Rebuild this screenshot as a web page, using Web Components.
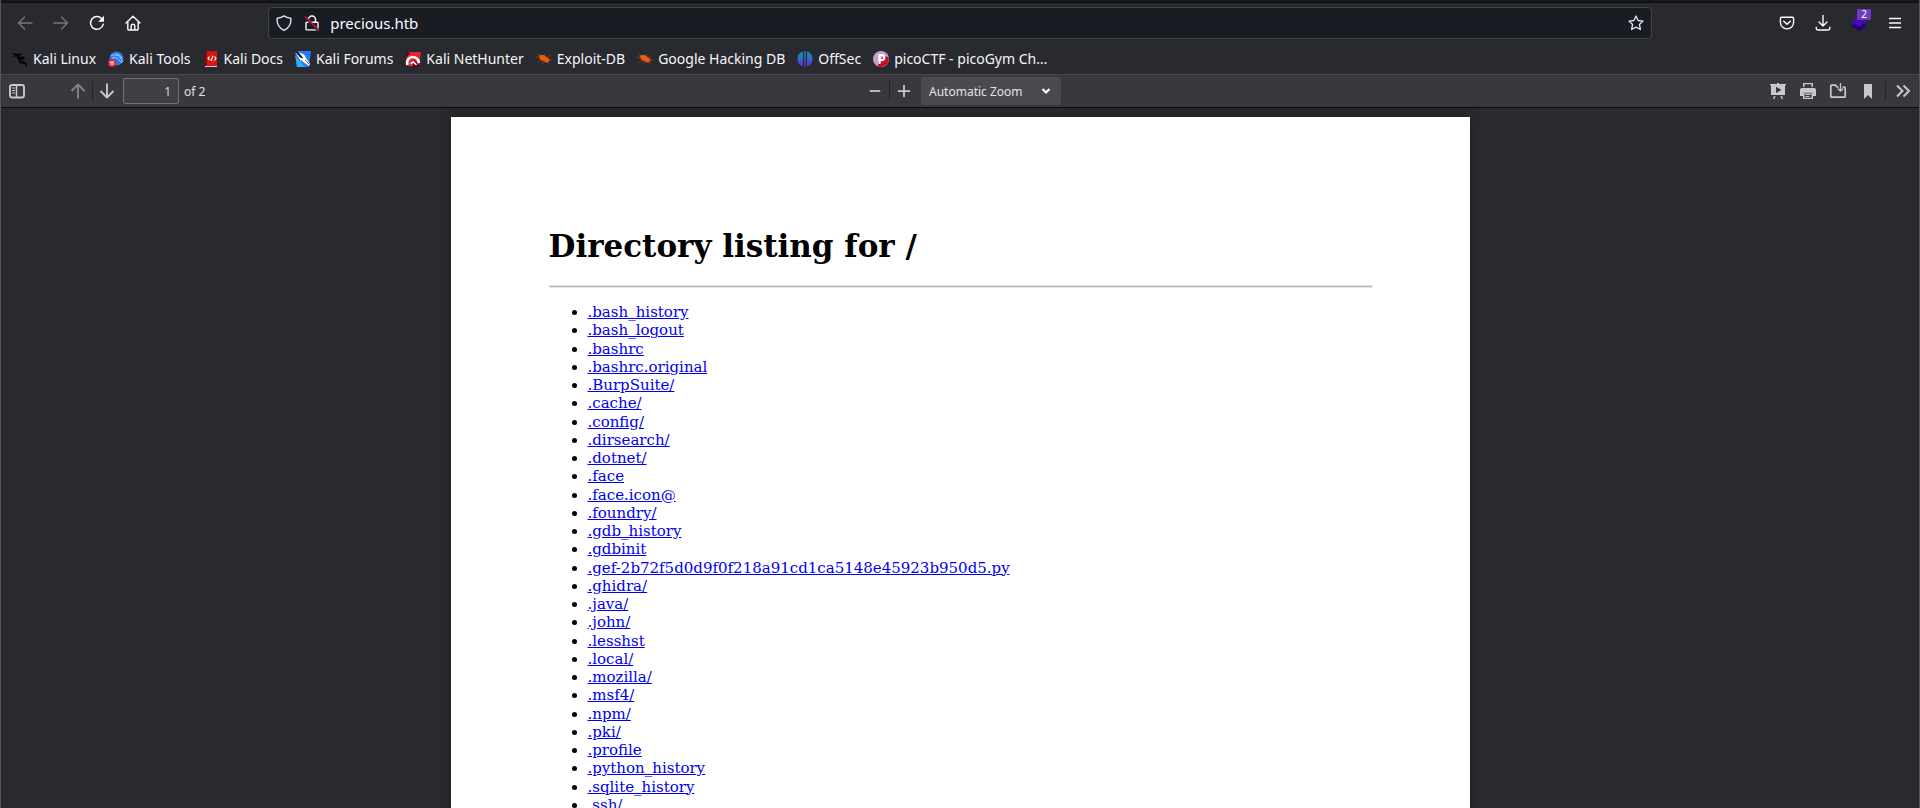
<!DOCTYPE html>
<html lang="en">
<head>
<meta charset="utf-8">
<title>precious.htb</title>
<style>
  html, body { margin: 0; height: 100%; }
  body { font-family: "Noto Sans", "Open Sans", sans-serif; background: #2a2a2e; overflow: hidden; }
</style>
</head>
<body>
<browser-window>
  <nav-bar slot="chrome" address="precious.htb" badge="2"></nav-bar>
  <bookmarks-bar slot="chrome">
    <bookmark-link icon="kali">Kali Linux</bookmark-link>
    <bookmark-link icon="tools">Kali Tools</bookmark-link>
    <bookmark-link icon="docs">Kali Docs</bookmark-link>
    <bookmark-link icon="forums">Kali Forums</bookmark-link>
    <bookmark-link icon="nethunter">Kali NetHunter</bookmark-link>
    <bookmark-link icon="bug">Exploit-DB</bookmark-link>
    <bookmark-link icon="bug">Google Hacking DB</bookmark-link>
    <bookmark-link icon="offsec">OffSec</bookmark-link>
    <bookmark-link icon="pico">picoCTF - picoGym Ch…</bookmark-link>
  </bookmarks-bar>
  <pdf-toolbar slot="chrome" page="1" pages="2"></pdf-toolbar>
  <pdf-page>
    <directory-listing path="/"></directory-listing>
  </pdf-page>
</browser-window>

<script>
const ICONS = {
  back: '<path d="M15 8H1.5M7.500 2 1.500 8l6 6" fill="none" stroke="currentColor" stroke-width="1.300" stroke-linecap="round" stroke-linejoin="round"/>',
  forward: '<path d="M1 8h13.500M8.500 2l6 6-6 6" fill="none" stroke="currentColor" stroke-width="1.300" stroke-linecap="round" stroke-linejoin="round"/>',
  reload: '<path d="M14.200 9.300A6.400 6.400 0 1 1 12.600 3.500" fill="none" stroke="currentColor" stroke-width="1.500" stroke-linecap="round"/><path d="M15 .8v5.400a.5.500 0 0 1-.5.500H9.200z" fill="currentColor"/>',
  home: '<path d="M1 8 8 1.200 15 8M2.800 6.700v7.600c0 .4.300.7.700.7h9c.4 0 .7-.3.700-.7V6.700M6.200 15v-4.500c0-.8.600-1.300 1.800-1.300s1.800.5 1.800 1.300V15" fill="none" stroke="currentColor" stroke-width="1.400" stroke-linecap="round" stroke-linejoin="round"/>',
  shield: '<path d="M8 .9c2 1.500 4.500 2.100 6.400 2.300.4 0 .6.300.6.700C15 9.300 13 13 8 15.300 3 13 1 9.300 1 3.900c0-.4.200-.7.600-.7C3.500 3 6 2.400 8 .9z" fill="none" stroke="currentColor" stroke-width="1.400" stroke-linejoin="round"/>',
  lock: '<path d="M4.500 7V4.500a3.500 3.500 0 0 1 7 0V7M2.800 7.300h10.400c.5 0 .8.300.8.800v6c0 .5-.3.800-.8.800H2.800c-.5 0-.8-.3-.8-.8v-6c0-.5.300-.8.800-.8z" fill="none" stroke="#fbfbfe" stroke-width="1.400"/><path d="M1.300 2.300 14 15" stroke="#1c1f27" stroke-width="2.600"/><path d="M1 1.500 15 15.300" stroke="#e0143f" stroke-width="1.400"/>',
  star: '<path d="M8 1l2.100 4.500 4.900.6-3.600 3.400 1 5L8 12.100 3.600 14.500l1-5L1 6.100l4.900-.6z" fill="none" stroke="currentColor" stroke-width="1.300" stroke-linejoin="round"/>',
  pocket: '<path d="M2.700 2.200h10.600c.8 0 1.300.5 1.300 1.300v3.800a6.600 6.600 0 0 1-13.200 0V3.500c0-.8.500-1.300 1.300-1.300z" fill="none" stroke="currentColor" stroke-width="1.400"/><path d="M4.700 6.200 8 9.300l3.300-3.100" fill="none" stroke="currentColor" stroke-width="1.500" stroke-linecap="round" stroke-linejoin="round"/>',
  download: '<path d="M8 .5v10.200M4 7l4 4 4-4M1.200 12.200v1.100c0 1.100.7 1.700 1.800 1.700h10c1.100 0 1.800-.6 1.800-1.700v-1.100" fill="none" stroke="currentColor" stroke-width="1.400" stroke-linecap="round" stroke-linejoin="round"/>',
  layers: '<path d="M8 6 16 11 8 16 0 11z" fill="#240079"/><path d="M8 1 16 6.500 8 12 0 6.500z" fill="#4a08b5"/>',
  menu: '<path d="M2 3.500h12M2 8h12M2 12.500h12" stroke="currentColor" stroke-width="1.300"/>',
  sidebar: '<rect x="1" y="2" width="14" height="12.500" rx="2" fill="none" stroke="currentColor" stroke-width="1.900"/><path d="M7.500 2v12" stroke="currentColor" stroke-width="1.500"/><path d="M3 5h3M3 7.500h3M3 10h3" stroke="currentColor"/>',
  up: '<path d="M8 15.500V1.500M1.500 8 8 1.500 14.500 8" fill="none" stroke="currentColor" stroke-width="1.900" stroke-linejoin="round"/>',
  down: '<path d="M8 .5v14M1.500 8 8 14.500 14.500 8" fill="none" stroke="currentColor" stroke-width="1.900" stroke-linejoin="round"/>',
  minus: '<path d="M2 8h12" stroke="currentColor" stroke-width="2"/>',
  plus: '<path d="M1 8h14M8 1v14" stroke="currentColor" stroke-width="2"/>',
  chevron: '<path d="M4.500 6 8 9.500 11.500 6" fill="none" stroke="currentColor" stroke-width="2.200"/>',
  present: '<path d="M7 0h2v1h7v1.200h-1V12H1V2.200H0V1h7zM6 3.700v6.400L11.500 7zM4 13h1.500L4.500 16H3zM10.500 13H12l1 3h-1.500z" fill="currentColor" fill-rule="evenodd"/>',
  print: '<path d="M3 0h10v4H3zm1.500 1.200V4h7V1.200zM2 5h12a2 2 0 0 1 2 2v6h-3V9H3v4H0V7a2 2 0 0 1 2-2zM3 9.300h10V16H3zm1.500 1.200v4.300h7v-4.300zM5.500 11h5v1h-5zm0 2h4v1h-4z" fill="currentColor" fill-rule="evenodd"/>',
  save: '<path d="M8.500 4H7L5.500 2.200H1.800c-.6 0-1 .4-1 1v10c0 .6.400 1 1 1h12.400c.6 0 1-.4 1-1V5c0-.6-.4-1-1-1H12.500" fill="none" stroke="currentColor" stroke-width="1.700"/><path d="M10.500 0v8M7.800 5.500l2.700 2.700 2.700-2.700" fill="none" stroke="currentColor" stroke-width="1.300"/>',
  mark: '<path d="M4 1h8v15l-4-4-4 4z" fill="currentColor"/>',
  more: '<path d="M2 2.500 7.500 8 2 13.500M8.500 2.500 14 8l-5.500 5.500" fill="none" stroke="currentColor" stroke-width="2"/>',
  kali: '<path d="M0 1.500 4 3l4-.5 2 1.500-3 .5 1 1.500c2-1 4.500-.5 5.500 1l-2-.3c1 .5 1 1.300 0 1.800-2 .2-3 .3-2.500 1.500 2 .5 4.500.5 5.500 2.500.5 1.200.7 2.500.5 4-.7-2-1.800-3.300-4-3.700-3-.3-4.500-1.300-4.300-3C6 8 5 7 5.500 5.500L1 5.800l2.500-1.300L0 3.500l2-.3z" fill="#050506"/>',
  tools: '<circle cx="8.500" cy="7.500" r="7" fill="#2878f0"/><path d="M3 5c3-2 7-1 9 1l3 5M4 7c3-1 6 0 7 2l3 3M7 3c3 0 5 1 7 4" fill="none" stroke="#9fd0ff" stroke-width="1"/><circle cx="4" cy="12" r="4" fill="#e02a36"/><path d="M2 11h4M3 11v3M5 11v3" stroke="#fff" stroke-width=".9"/>',
  docs: '<path d="M2 0h2v16H2z" fill="#8c0709"/><path d="M4 0h10v15H4z" fill="#d91512"/><path d="M2 15h12v1H2z" fill="#e9caca"/><path d="M6.500 5.500 5 7.500l1.500 1.500M11.500 5.500 13 7.500 11.500 9.500M10 4.800 8 10" fill="none" stroke="#fff" stroke-width="1.100"/>',
  forums: '<path d="M0 0h16L14 16H2z" fill="#217cf4"/><path d="M0 4 2 16h8z" fill="#35aaf8"/><path d="M2 1c4 1 8 2 9 6l4 6-1 2-3-2-4-3C4 9 3 5 1 2z" fill="#fff"/><path d="M0 0 3 1 8 7 5 6zM10 9l4 4" fill="#111" stroke="#111" stroke-width=".6"/>',
  nethunter: '<path d="M1 1h15l-2 14H3z" fill="#e52535"/><path d="M0 0 5 2 2 6zM9 9l7 7H8z" fill="#4a0c14"/><path d="M2.500 14C1 9.500 4 6 7.500 6s6 2.500 6.500 6" fill="none" stroke="#fff" stroke-width="2.600"/><path d="M5.500 12.500 8.500 11l3 3" stroke="#fff" stroke-width="1.500" fill="none"/>',
  bug: '<path d="M3 4.500c3-1 5.500-.5 7.500 1.500 2 1 3.500 2 3 4l-2 1.500c-2 0-3-.5-4-1.500C5 9.500 3 8 3 4.500z" fill="#ec5e12"/><path d="M0 6l5 1M2 11l5-2M6 13l3-4M9 3l1 4M14 4l-3 4M16 9l-4 0M13 13l-2-3M1 3l4 2" stroke="#a9480f" stroke-width=".7"/>',
  offsec: '<defs><linearGradient id="g" x1="0" y1="0" x2="0" y2="1"><stop offset="0" stop-color="#0f9cab"/><stop offset=".55" stop-color="#3560d0"/><stop offset="1" stop-color="#6a24bd"/></linearGradient></defs><path d="M6 .5v15C2.500 14.500.5 11.500.5 8S2.500 1.500 6 .5zM7.300 0h1.400v16H7.300zM10 .5c3.500 1 5.500 4 5.500 7.500s-2 6.500-5.500 7.500z" fill="url(#g)"/>',
  pico: '<circle cx="8" cy="8" r="8" fill="#c79fc9"/><path d="M15.500 6A8 8 0 0 1 5 15.400V11l6-6z" fill="#c50f2c"/><path d="M6.500 13V4h2.200a2.600 2.600 0 0 1 0 5.200H6.500" fill="none" stroke="#fff" stroke-width="2.200"/>'
};

class UiIcon extends HTMLElement {
  connectedCallback() {
    this.attachShadow({ mode: 'open' }).innerHTML = `
      <style>
        :host { display: block; flex: none; width: var(--icon-size, 16px); height: var(--icon-size, 16px); }
        svg { display: block; width: 100%; height: 100%; overflow: visible; }
      </style>
      <svg viewBox="0 0 16 16" aria-hidden="true">${ICONS[this.getAttribute('name')]}</svg>`;
  }
}

class BrowserWindow extends HTMLElement {
  connectedCallback() {
    this.attachShadow({ mode: 'open' }).innerHTML = `
      <style>
        :host { display: flex; flex-direction: column; height: 100vh; box-sizing: border-box;
                border: solid #55565a; border-width: 0 1px; background: #2a2a2e; }
        .strip { height: 2px; flex: none; background: #17181d; border-bottom: 1px solid #0b0c0f; }
        header { flex: none; }
        main { flex: 1; min-height: 0; overflow: auto; scrollbar-width: none; padding-top: 9px; }
      </style>
      <div class="strip"></div>
      <header><slot name="chrome"></slot></header>
      <main><slot></slot></main>`;
  }
}

class NavBar extends HTMLElement {
  connectedCallback() {
    this.attachShadow({ mode: 'open' }).innerHTML = `
      <style>
        :host { display: flex; align-items: center; height: 40px; padding: 0 6px; background: #292a2f; color: #fbfbfe; }
        button { display: grid; place-items: center; width: 36px; height: 32px; padding: 0; border: 0; background: none; color: inherit; }
        button:disabled { color: #77787c; }
        .group { display: flex; }
        .spring { flex: 3; }
        .url { flex: 35; display: flex; align-items: center; box-sizing: border-box; height: 32px; padding: 0 7px;
               border: 1px solid #42434a; border-radius: 4px; background: #1a1c24; }
        .url ui-icon { color: #e4e4e8; }
        .url button { width: 16px; }
        .url button + button { margin-left: 12px; }
        input { flex: 1; min-width: 0; margin: 0 12px 0 10px; padding: 0; border: 0; outline: 0; background: none; color: #fbfbfe; font: 15px/20px "Noto Sans", sans-serif; }
        .ext { position: relative; }
        .badge { position: absolute; left: 16px; top: 2px; width: 14px; height: 11px; border-radius: 1px; background: #6b3cc0; color: #fff; font: 10px/11px "Noto Sans", sans-serif; text-align: center; }
      </style>
      <div class="group">
        <button disabled aria-label="Back"><ui-icon name="back"></ui-icon></button>
        <button disabled aria-label="Forward"><ui-icon name="forward"></ui-icon></button>
        <button aria-label="Reload"><ui-icon name="reload"></ui-icon></button>
        <button aria-label="Home"><ui-icon name="home"></ui-icon></button>
      </div>
      <div class="spring"></div>
      <div class="url">
        <button aria-label="Tracking protection"><ui-icon name="shield"></ui-icon></button>
        <button aria-label="Connection not secure"><ui-icon name="lock"></ui-icon></button>
        <input type="text" aria-label="Address" value="${this.getAttribute('address')}">
        <button aria-label="Bookmark this page"><ui-icon name="star"></ui-icon></button>
      </div>
      <div class="spring"></div>
      <div class="group">
        <button aria-label="Save to Pocket"><ui-icon name="pocket"></ui-icon></button>
        <button aria-label="Downloads"><ui-icon name="download"></ui-icon></button>
        <button class="ext" aria-label="Wappalyzer"><ui-icon name="layers"></ui-icon><span class="badge">${this.getAttribute('badge')}</span></button>
        <button aria-label="Menu"><ui-icon name="menu"></ui-icon></button>
      </div>`;
  }
}

class BookmarksBar extends HTMLElement {
  connectedCallback() {
    this.attachShadow({ mode: 'open' }).innerHTML = `
      <style>
        :host { display: flex; align-items: center; gap: 12px; height: 31px; padding: 0 11px; background: #292a2f; }
      </style>
      <slot></slot>`;
  }
}

class BookmarkLink extends HTMLElement {
  connectedCallback() {
    this.attachShadow({ mode: 'open' }).innerHTML = `
      <style>
        :host { display: block; }
        a { display: flex; align-items: center; gap: 5px; color: #f6f6f9; text-decoration: none; white-space: nowrap; font-size: 14px; line-height: 20px; }
      </style>
      <a href="#"><ui-icon name="${this.getAttribute('icon')}"></ui-icon><span><slot></slot></span></a>`;
  }
}

class PdfToolbar extends HTMLElement {
  connectedCallback() {
    this.attachShadow({ mode: 'open' }).innerHTML = `
      <style>
        :host { display: grid; grid-template-columns: 1fr auto 1fr; align-items: center; height: 32px; padding-left: 2px;
                border-top: 1px solid #47474c; border-bottom: 1px solid #0c0c0d; background: #38383d;
                color: #c9c9cd; font-size: 12px; }
        div { display: flex; align-items: center; }
        button { display: grid; place-items: center; width: 28px; height: 28px; padding: 0; border: 0; background: none; color: inherit; }
        button:disabled { color: #828286; }
        i { width: 1px; height: 20px; background: #242428; }
        .up { margin-left: 33px; }
        .tools { justify-content: flex-end; gap: 2px; padding-right: 2px; }
        .tools i { margin: 0 1px; }
        .zoom-out, .zoom-in { --icon-size: 14px; }
        input { box-sizing: border-box; width: 56px; height: 26px; margin: 0 5px 0 2px; padding: 0 7px; border: 1px solid #737377;
                border-radius: 2px; background: #404044; color: #d6d6d9; text-align: right; font: 12px "Noto Sans", sans-serif; }
        label { color: #e4e4e7; }
        .select { position: relative; margin-left: 3px; }
        select { appearance: none; width: 140px; height: 28px; padding: 0 8px; border: 0; border-radius: 2px; background: #4a4a4f;
                 color: #e4e4e7; font: 12px "Noto Sans", sans-serif; }
        .select ui-icon { position: absolute; right: 7px; top: 6px; color: #fff; pointer-events: none; }
      </style>
      <div>
        <button aria-label="Toggle sidebar"><ui-icon name="sidebar"></ui-icon></button>
        <button class="up" disabled aria-label="Previous page"><ui-icon name="up"></ui-icon></button>
        <i></i>
        <button aria-label="Next page"><ui-icon name="down"></ui-icon></button>
        <input id="page" type="text" value="${this.getAttribute('page')}">
        <label for="page">of ${this.getAttribute('pages')}</label>
      </div>
      <div>
        <button class="zoom-out" aria-label="Zoom out"><ui-icon name="minus"></ui-icon></button>
        <i></i>
        <button class="zoom-in" aria-label="Zoom in"><ui-icon name="plus"></ui-icon></button>
        <span class="select"><select aria-label="Zoom"><option>Automatic Zoom</option></select><ui-icon name="chevron"></ui-icon></span>
      </div>
      <div class="tools">
        <button aria-label="Presentation mode"><ui-icon name="present"></ui-icon></button>
        <button aria-label="Print"><ui-icon name="print"></ui-icon></button>
        <button aria-label="Save"><ui-icon name="save"></ui-icon></button>
        <button aria-label="Current view"><ui-icon name="mark"></ui-icon></button>
        <i></i>
        <button aria-label="Tools"><ui-icon name="more"></ui-icon></button>
      </div>`;
  }
}

class PdfPage extends HTMLElement {
  connectedCallback() {
    this.attachShadow({ mode: 'open' }).innerHTML = `
      <style>
        :host { display: block; box-sizing: border-box; width: 100%; max-width: 1019px; min-height: 1319px; margin: 0 auto;
                padding: 109px 97px 109px 98px; background: #fff; color: #000; box-shadow: 0 0 8px #202023; }
      </style>
      <slot></slot>`;
  }
}

const FILES = ['.bash_history', '.bash_logout', '.bashrc', '.bashrc.original', '.BurpSuite/', '.cache/', '.config/',
  '.dirsearch/', '.dotnet/', '.face', '.face.icon@', '.foundry/', '.gdb_history', '.gdbinit',
  '.gef-2b72f5d0d9f0f218a91cd1ca5148e45923b950d5.py', '.ghidra/', '.java/', '.john/', '.lesshst', '.local/',
  '.mozilla/', '.msf4/', '.npm/', '.pki/', '.profile', '.python_history', '.sqlite_history', '.ssh/'];

class DirectoryListing extends HTMLElement {
  connectedCallback() {
    this.attachShadow({ mode: 'open' }).innerHTML = `
      <style>
        :host { display: block; font-family: "DejaVu Serif", serif; }
        h1 { margin: 0; font-size: 31px; line-height: 40px; font-weight: bold; }
        hr { height: 1px; margin: 19px 0 15px; border: 1px solid #e6e6e6; background: #b4b4b4; }
        ul { display: grid; grid-auto-rows: 1fr; min-height: 511px; margin: 0; padding: 0 0 0 39px; font-size: 15px; line-height: 18px; }
        a { color: #00e; }
      </style>
      <h1>Directory listing for ${this.getAttribute('path')}</h1>
      <hr>
      <ul>${FILES.map(f => `<li><a href="#">${f}</a></li>`).join('')}</ul>`;
  }
}

customElements.define('ui-icon', UiIcon);
customElements.define('browser-window', BrowserWindow);
customElements.define('nav-bar', NavBar);
customElements.define('bookmarks-bar', BookmarksBar);
customElements.define('bookmark-link', BookmarkLink);
customElements.define('pdf-toolbar', PdfToolbar);
customElements.define('pdf-page', PdfPage);
customElements.define('directory-listing', DirectoryListing);
</script>
</body>
</html>
